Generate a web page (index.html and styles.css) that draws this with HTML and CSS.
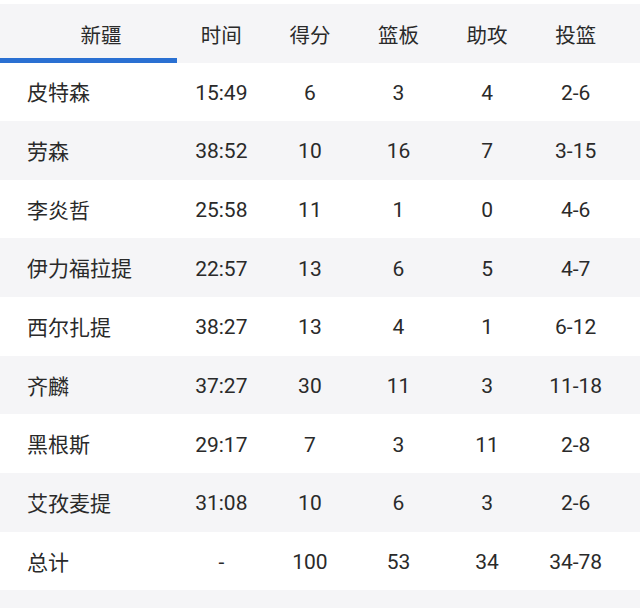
FILE: index.html
```html
<!DOCTYPE html>
<html lang="zh">
<head>
<meta charset="utf-8">
<link rel="stylesheet" href="styles.css">
</head>
<body>
<div class="board">
  <div class="row head">
    <div class="cell name active">新疆</div>
    <div class="cell">时间</div>
    <div class="cell">得分</div>
    <div class="cell">篮板</div>
    <div class="cell">助攻</div>
    <div class="cell">投篮</div>
  </div>
  <div class="row">
    <div class="cell name">皮特森</div><div class="cell">15:49</div><div class="cell">6</div><div class="cell">3</div><div class="cell">4</div><div class="cell">2-6</div>
  </div>
  <div class="row alt">
    <div class="cell name">劳森</div><div class="cell">38:52</div><div class="cell">10</div><div class="cell">16</div><div class="cell">7</div><div class="cell">3-15</div>
  </div>
  <div class="row">
    <div class="cell name">李炎哲</div><div class="cell">25:58</div><div class="cell">11</div><div class="cell">1</div><div class="cell">0</div><div class="cell">4-6</div>
  </div>
  <div class="row alt">
    <div class="cell name">伊力福拉提</div><div class="cell">22:57</div><div class="cell">13</div><div class="cell">6</div><div class="cell">5</div><div class="cell">4-7</div>
  </div>
  <div class="row">
    <div class="cell name">西尔扎提</div><div class="cell">38:27</div><div class="cell">13</div><div class="cell">4</div><div class="cell">1</div><div class="cell">6-12</div>
  </div>
  <div class="row alt">
    <div class="cell name">齐麟</div><div class="cell">37:27</div><div class="cell">30</div><div class="cell">11</div><div class="cell">3</div><div class="cell">11-18</div>
  </div>
  <div class="row">
    <div class="cell name">黑根斯</div><div class="cell">29:17</div><div class="cell">7</div><div class="cell">3</div><div class="cell">11</div><div class="cell">2-8</div>
  </div>
  <div class="row alt">
    <div class="cell name">艾孜麦提</div><div class="cell">31:08</div><div class="cell">10</div><div class="cell">6</div><div class="cell">3</div><div class="cell">2-6</div>
  </div>
  <div class="row">
    <div class="cell name">总计</div><div class="cell">-</div><div class="cell">100</div><div class="cell">53</div><div class="cell">34</div><div class="cell">34-78</div>
  </div>
</div>
</body>
</html>
```
FILE: styles.css
```css
html, body {
  margin: 0;
  padding: 0;
}
body {
  background: #f5f5f7;
  font-family: Roboto, "Noto Sans CJK SC", sans-serif;
  color: #2a2a2a;
  font-size: 21px;
  width: 640px;
  height: 608px;
  overflow: hidden;
}
.board {
  padding-top: 4px;
  background: #fff;
}
.row {
  display: grid;
  grid-template-columns: 177px repeat(5, 88.6px) 1fr;
  height: 58.67px;
  background: #fff;
  align-items: center;
}
.row.alt,
.row.head {
  background: #f5f5f7;
}
.row.head {
  height: 58.5px;
  align-items: stretch;
}
.cell {
  text-align: center;
  white-space: nowrap;
  line-height: 1;
  padding-top: 3px;
}
.head .cell {
  display: flex;
  align-items: center;
  justify-content: center;
  font-family: "Noto Sans CJK SC", sans-serif;
  font-size: 20.5px;
  padding-top: 2px;
}
.cell.name {
  text-align: left;
  padding-left: 27px;
  padding-top: 0;
  font-family: "Noto Sans CJK SC", sans-serif;
}
.head .cell.name {
  padding-left: 25px;
  justify-content: center;
  box-sizing: border-box;
  border-bottom: 5px solid #2a70d2;
  padding-top: 7px;
}
```
